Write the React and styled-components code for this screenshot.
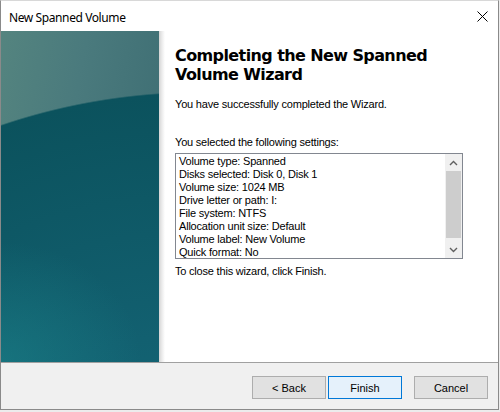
import styled, { createGlobalStyle } from 'styled-components'

const GlobalStyle = createGlobalStyle`
    html, body {
        margin: 0;
        padding: 0;
        background: #ececec;
    }
    * {
        box-sizing: border-box;
    }
`

const Window = styled.div`
    width: 499px;
    height: 410px;
    background: #ffffff;
    border: 1px solid #8a8a8a;
    border-top-color: #d8d8d8;
    display: flex;
    flex-direction: column;
    font-family: 'Liberation Sans', Arial, sans-serif;
    color: #000;
`

const TitleBar = styled.div`
    height: 30px;
    flex: none;
    display: flex;
    align-items: center;
    justify-content: space-between;
    padding-left: 8px;
`

const TitleText = styled.span`
    font-family: 'Noto Sans', 'Open Sans', sans-serif;
    font-size: 12px;
    letter-spacing: -0.4px;
    margin-top: 2px;
`

const CloseButton = styled.div`
    width: 32px;
    height: 30px;
    display: flex;
    align-items: center;
    justify-content: center;
    padding-top: 1px;
`

const Body = styled.div`
    flex: 1;
    display: flex;
    min-height: 0;
`

// dark teal arc over a greyish teal band at the top
const SidePanel = styled.div`
    width: 158px;
    flex: none;
    background:
        radial-gradient(ellipse 582px 540px at 200px 600px,
            #17707f 0%,
            #126070 55%,
            #0b525d 99.6%,
            rgba(11, 82, 93, 0) 99.9%),
        linear-gradient(100deg, #54847f 0%, #4a7a7d 40%, #3b6b71 100%);
    position: relative;

    &::after {
        content: '';
        position: absolute;
        inset: 0;
        background: radial-gradient(ellipse 140px 120px at 0 100%,
            rgba(30, 140, 145, 0.45), rgba(30, 140, 145, 0));
    }
`

const Shadow = styled.div`
    width: 6px;
    flex: none;
    background: linear-gradient(to right, #d4d4d4, #ececec 50%, #ffffff);
`

const Content = styled.div`
    flex: 1;
    display: flex;
    flex-direction: column;
    padding: 15px 0 0 10px;
`

const Heading = styled.h1`
    margin: 0;
    font-family: 'DejaVu Sans', Verdana, sans-serif;
    font-weight: bold;
    font-size: 16px;
    line-height: 19px;
    letter-spacing: -0.6px;
    width: 300px;
`

const Paragraph = styled.p`
    margin: ${props => props.$top || 0}px 0 0;
    font-size: 11px;
    line-height: 13px;
    letter-spacing: -0.2px;
`

const ListBox = styled.div`
    width: 288px;
    height: 106px;
    margin-top: 4px;
    border: 1px solid #828790;
    display: flex;
    background: #fff;
`

const ListText = styled.div`
    flex: 1;
    padding: 1px 0 0 3px;
    font-size: 11px;
    line-height: 13px;
    letter-spacing: -0.2px;
`

const ScrollBar = styled.div`
    width: 17px;
    flex: none;
    background: #f0f0f0;
    display: flex;
    flex-direction: column;
    align-items: center;
`

const ScrollArrow = styled.div`
    height: 17px;
    width: 17px;
    display: flex;
    align-items: center;
    justify-content: center;
    flex: none;
`

const ThumbTrack = styled.div`
    flex: 1;
    display: flex;
    flex-direction: column;
    align-items: center;
    padding-bottom: 3px;
`

const Thumb = styled.div`
    width: 15px;
    flex: 1;
    background: #cdcdcd;
`

const Footer = styled.div`
    height: 47px;
    flex: none;
    border-top: 1px solid #a0a0a0;
    background: #f0f0f0;
    display: flex;
    align-items: flex-start;
    justify-content: flex-end;
    padding: 13px 10px 0 0;
    gap: 2px;
`

const Button = styled.button`
    width: 74px;
    height: 23px;
    margin-left: ${props => props.$gap || 0}px;
    font-family: 'Liberation Sans', Arial, sans-serif;
    font-size: 11px;
    color: #000;
    background: ${props => (props.$primary ? '#e5f1fb' : '#e1e1e1')};
    border: 1px solid ${props => (props.$primary ? '#0078d7' : '#adadad')};
    padding: 0;
`

const settings = [
    'Volume type: Spanned',
    'Disks selected: Disk 0, Disk 1',
    'Volume size: 1024 MB',
    'Drive letter or path: I:',
    'File system: NTFS',
    'Allocation unit size: Default',
    'Volume label: New Volume',
    'Quick format: No',
]

function App() {
    return (
        <>
            <GlobalStyle />
            <Window>
                <TitleBar>
                    <TitleText>New Spanned Volume</TitleText>
                    <CloseButton>
                        <svg width="11" height="11" viewBox="0 0 11 11">
                            <path d="M0.5 0.5 L10.5 10.5 M10.5 0.5 L0.5 10.5" stroke="#000" strokeWidth="1" fill="none" />
                        </svg>
                    </CloseButton>
                </TitleBar>
                <Body>
                    <SidePanel />
                    <Shadow />
                    <Content>
                        <Heading>Completing the New Spanned Volume Wizard</Heading>
                        <Paragraph $top={14}>You have successfully completed the Wizard.</Paragraph>
                        <Paragraph $top={25}>You selected the following settings:</Paragraph>
                        <ListBox>
                            <ListText>
                                {settings.map(line => (
                                    <div key={line}>{line}</div>
                                ))}
                            </ListText>
                            <ScrollBar>
                                <ScrollArrow>
                                    <svg width="9" height="6" viewBox="0 0 9 6">
                                        <path d="M1 5 L4.5 1.5 L8 5" stroke="#606060" strokeWidth="1.4" fill="none" />
                                    </svg>
                                </ScrollArrow>
                                <ThumbTrack>
                                    <Thumb />
                                </ThumbTrack>
                                <ScrollArrow>
                                    <svg width="9" height="6" viewBox="0 0 9 6">
                                        <path d="M1 1 L4.5 4.5 L8 1" stroke="#606060" strokeWidth="1.4" fill="none" />
                                    </svg>
                                </ScrollArrow>
                            </ScrollBar>
                        </ListBox>
                        <Paragraph $top={6}>To close this wizard, click Finish.</Paragraph>
                    </Content>
                </Body>
                <Footer>
                    <Button>&lt; Back</Button>
                    <Button $primary>Finish</Button>
                    <Button $gap={10}>Cancel</Button>
                </Footer>
            </Window>
        </>
    )
}

export default App
